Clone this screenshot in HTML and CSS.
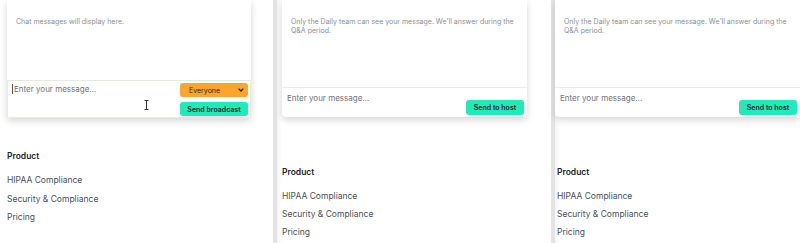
FILE: index.html
```html
<!DOCTYPE html>
<html lang="en">
<head>
    <meta charset="UTF-8">
    <title>Chat modes</title>
    <link rel="stylesheet" href="styles.css">
</head>
<body>
    <div class="strip">

        <!-- broadcast view -->
        <section class="shot shot-first">
            <div class="chat-card card-broadcast">
                <div class="messages">
                    <p>Chat messages will display here.</p>
                </div>
                <div class="composer composer-focus">
                    <div class="input">Enter your message...</div>
                    <div class="controls">
                        <div class="select">
                            <span>Everyone</span>
                            <svg width="6" height="4" viewBox="0 0 6 4"><path d="M0.6 0.6 L3 3 L5.4 0.6" fill="none" stroke="#222" stroke-width="1.3"/></svg>
                        </div>
                        <button class="send-btn btn-wide">Send broadcast</button>
                    </div>
                </div>
                <svg class="ibeam" width="5" height="10" viewBox="0 0 5 10"><path d="M0.5 0.5 H4.5 M2.5 0.5 V9.5 M0.5 9.5 H4.5" fill="none" stroke="#333" stroke-width="1"/></svg>
            </div>
            <div class="footer-links links-first">
                <h4>Product</h4>
                <a href="#">HIPAA Compliance</a>
                <a href="#">Security &amp; Compliance</a>
                <a href="#">Pricing</a>
            </div>
        </section>

        <!-- attendee view -->
        <section class="shot shot-edge shot-second">
            <div class="chat-card card-host">
                <div class="messages">
                    <p>Only the Daily team can see your message. We'll answer during the Q&amp;A period.</p>
                </div>
                <div class="composer">
                    <div class="input">Enter your message...</div>
                    <div class="controls">
                        <button class="send-btn">Send to host</button>
                    </div>
                </div>
            </div>
            <div class="footer-links">
                <h4>Product</h4>
                <a href="#">HIPAA Compliance</a>
                <a href="#">Security &amp; Compliance</a>
                <a href="#">Pricing</a>
            </div>
        </section>

        <section class="shot shot-edge shot-third">
            <div class="chat-card card-host card-third">
                <div class="messages">
                    <p>Only the Daily team can see your message. We'll answer during the Q&amp;A period.</p>
                </div>
                <div class="composer">
                    <div class="input">Enter your message...</div>
                    <div class="controls">
                        <button class="send-btn">Send to host</button>
                    </div>
                </div>
            </div>
            <div class="footer-links">
                <h4>Product</h4>
                <a href="#">HIPAA Compliance</a>
                <a href="#">Security &amp; Compliance</a>
                <a href="#">Pricing</a>
            </div>
        </section>

    </div>
</body>
</html>
```

FILE: styles.css
```css
:root {
    --daily-green: #1febb8;
    --daily-orange: #fba52e;
    --text-dark: #1c232b;
    --text-grey: #8b8f94;
    --link-grey: #4a5058;
}

body {
    margin: 0;
    background: #fff;
    font-family: 'Inter', 'Noto Sans', sans-serif;
    overflow: hidden;
}

.strip {
    display: flex;
    height: 243px;
    overflow: hidden;
}

.shot {
    display: flex;
    flex-direction: column;
    background: #fff;
}

.shot-first {
    width: 273px;
}

.shot-second {
    width: 274px;
}

.shot-third {
    flex: 1;
}

/* each later shot has the grey window edge on its left */
.shot-edge {
    border-left: 4px solid #e3e3e3;
    box-shadow: inset 4px 0 4px -2px rgba(0, 0, 0, 0.05);
}

.chat-card {
    position: relative;
    display: flex;
    flex-direction: column;
    flex-shrink: 0;
    background: #fff;
    box-shadow: 0 3px 7px rgba(0, 0, 0, 0.16);
    border-radius: 0 0 4px 4px;
}

.card-broadcast {
    margin-left: 7px;
    width: 244px;
    height: 118px;
}

.card-host {
    margin-left: 5px;
    width: 245px;
    height: 117px;
}

.card-third {
    margin-left: 0;
}

.messages {
    flex: 1;
    padding: 18px 10px 0 9px;
    border-bottom: 1px solid #ececec;
}

.messages p {
    margin: 0;
    font-size: 7px;
    line-height: 8px;
    color: var(--text-grey);
}

.card-host .messages p {
    line-height: 8.5px;
}

.composer {
    display: flex;
    justify-content: space-between;
    padding: 3px 3px 2px 5px;
}

.card-broadcast .composer {
    height: 38px;
    box-sizing: border-box;
}

.composer-focus {
    border: 1px solid #e6eedb;
    border-top-color: #e2ecd6;
    padding: 2px 2px 1px 4px;
    margin-top: -1px;
}

.card-host .composer {
    height: 29px;
    box-sizing: border-box;
}

.input {
    font-size: 8px;
    line-height: 12px;
    padding-top: 1px;
    color: #6f7378;
}

.composer-focus .input {
    border-left: 1px solid #555;
    padding-left: 1px;
    line-height: 10px;
    height: 10px;
    margin-top: 1px;
    padding-top: 0;
}

.controls {
    display: flex;
    flex-direction: column;
    justify-content: flex-end;
    gap: 5px;
}

.select {
    display: flex;
    align-items: center;
    justify-content: space-between;
    width: 68px;
    height: 14px;
    box-sizing: border-box;
    padding: 0 4px 0 9px;
    background: var(--daily-orange);
    border-radius: 3px;
    font-size: 7px;
    color: #2b2b2b;
}

.send-btn {
    height: 15px;
    width: 58px;
    padding: 0;
    border: none;
    border-radius: 3px;
    background: var(--daily-green);
    color: var(--text-dark);
    font-family: inherit;
    font-size: 7px;
    font-weight: 600;
}

.btn-wide {
    width: 68px;
    height: 14px;
}

.ibeam {
    position: absolute;
    left: 137px;
    top: 100px;
}

.footer-links {
    display: flex;
    flex-direction: column;
    padding: 32px 0 0 7px;
}

.shot-edge .footer-links {
    padding: 49px 0 0 5px;
}

.shot-third .footer-links {
    padding-left: 2px;
}

.footer-links h4 {
    margin: 0 0 12px;
    font-size: 8.5px;
    line-height: 12px;
    font-weight: 600;
    color: var(--text-dark);
}

.footer-links a {
    font-size: 8.5px;
    line-height: 12px;
    margin-bottom: 6.7px;
    color: var(--link-grey);
    text-decoration: none;
}

.shot-edge .footer-links a {
    margin-bottom: 6px;
}
```
